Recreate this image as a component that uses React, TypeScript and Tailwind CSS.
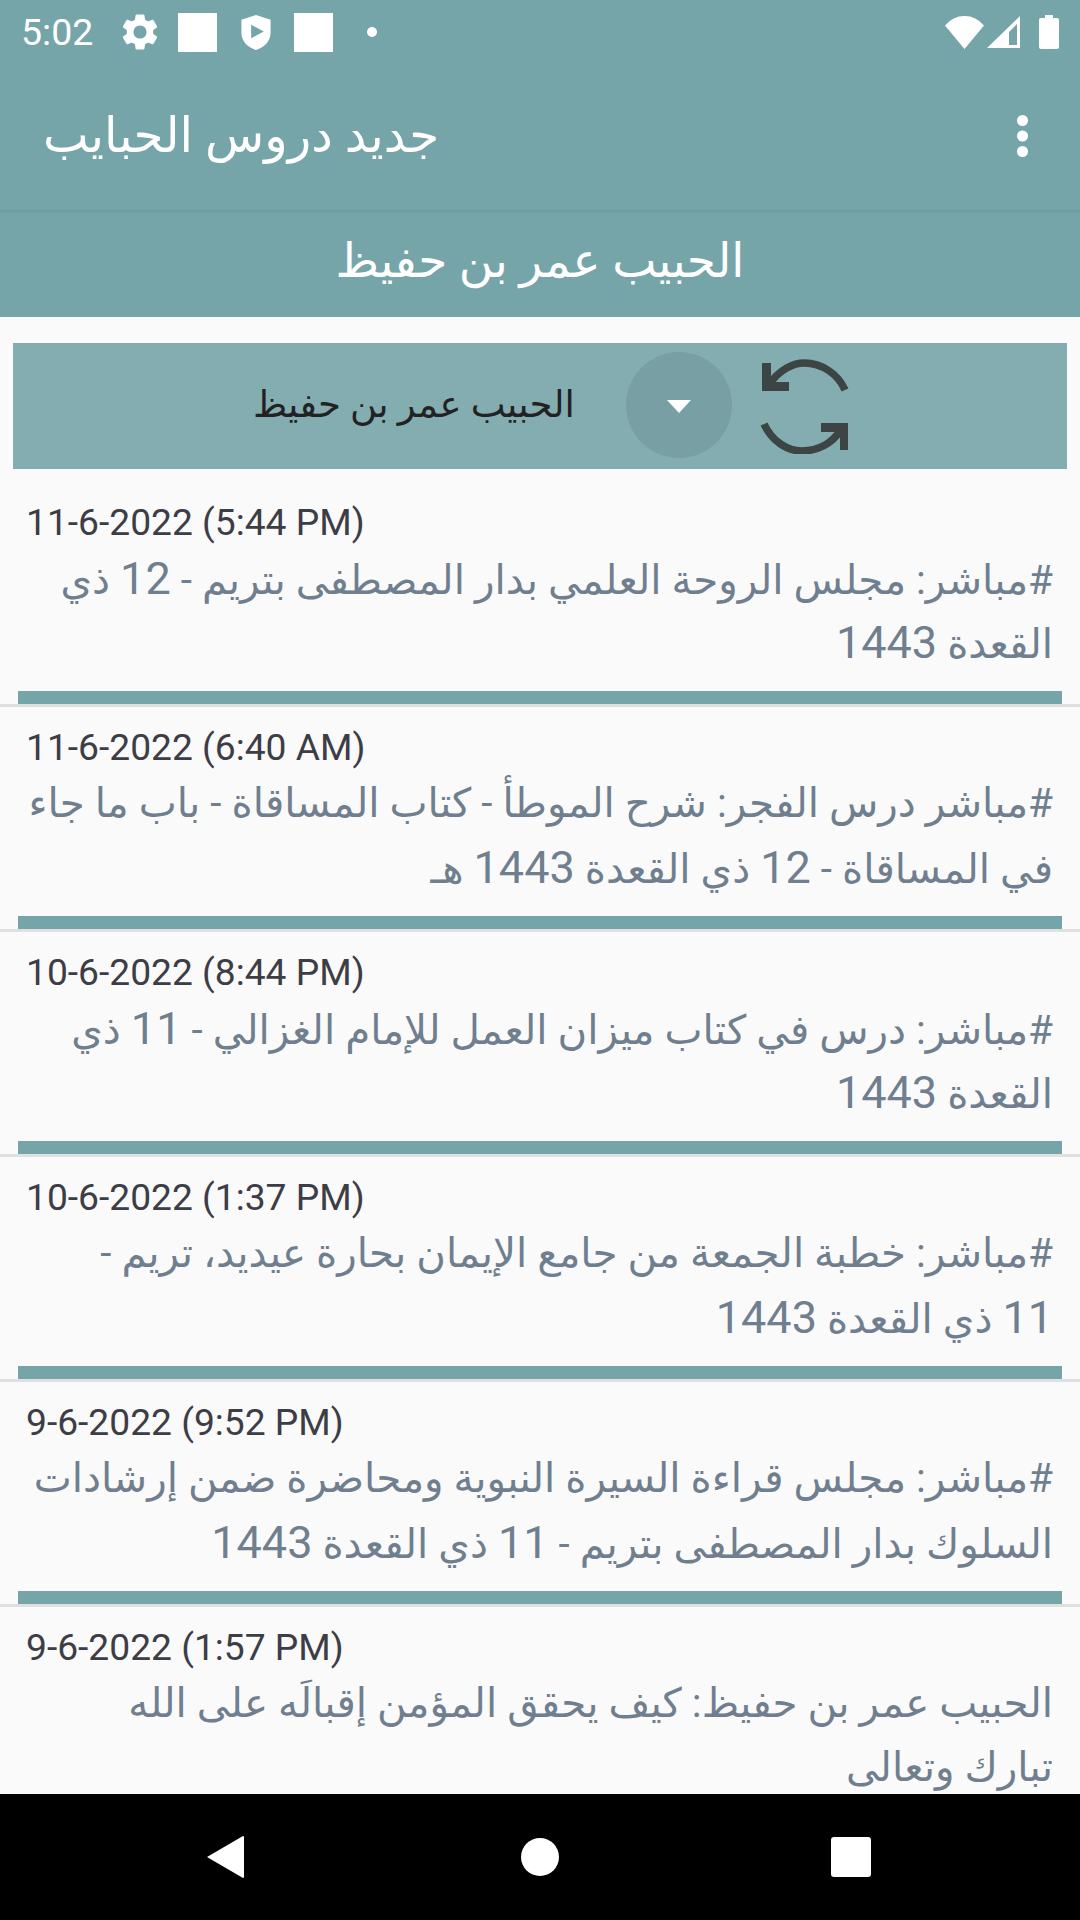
import React from "react";

const rows: [string, string, string][] = [
  ["11-6-2022 (5:44 PM)", "#مباشر: مجلس الروحة العلمي بدار المصطفى بتريم - 12 ذي", "القعدة 1443"],
  ["11-6-2022 (6:40 AM)", "#مباشر درس الفجر: شرح الموطأ - كتاب المساقاة - باب ما جاء", "في المساقاة - 12 ذي القعدة 1443 هـ"],
  ["10-6-2022 (8:44 PM)", "#مباشر: درس في كتاب ميزان العمل للإمام الغزالي - 11 ذي", "القعدة 1443"],
  ["10-6-2022 (1:37 PM)", "#مباشر: خطبة الجمعة من جامع الإيمان بحارة عيديد، تريم -", "11 ذي القعدة 1443"],
  ["9-6-2022 (9:52 PM)", "#مباشر: مجلس قراءة السيرة النبوية ومحاضرة ضمن إرشادات", "السلوك بدار المصطفى بتريم - 11 ذي القعدة 1443"],
  ["9-6-2022 (1:57 PM)", "الحبيب عمر بن حفيظ: كيف يحقق المؤمن إقبالَه على الله", "تبارك وتعالى"],
];

const font = "font-['Roboto','Noto_Sans','DejaVu_Sans',sans-serif]";

function Line({ text }: { text: string }) {
  return (
    <div className="h-[64px] leading-[64px] whitespace-nowrap">
      {text.split(/(\d+)/).map((part, i) =>
        /^\d+$/.test(part) ? (
          <span key={i} className="text-[45px]">{part}</span>
        ) : (
          <span key={i}>{part}</span>
        )
      )}
    </div>
  );
}

function Row({ date, a, b }: { date: string; a: string; b: string }) {
  return (
    <div className="h-[225px] shrink-0 flex flex-col">
      <div className="h-[209px] shrink-0 pl-[26px] pr-[27px] pt-[17px] flex flex-col">
        <div className="text-[37.2px] leading-[46px] text-[#3d3d46]">{date}</div>
        <div dir="rtl" className="text-[40.4px] text-[#6f7f8f] mt-[2px]">
          <Line text={a} />
          <Line text={b} />
        </div>
      </div>
      <div className="mx-[18px] h-[13px] shrink-0 bg-[#76a5a9]" />
      <div className="h-[3px] shrink-0 bg-[#e0e0e0]" />
    </div>
  );
}

export default function App() {
  return (
    <div className={`w-[1080px] h-[1920px] overflow-hidden flex flex-col bg-[#fafafa] ${font}`}>
      <div className="h-[210px] shrink-0 bg-[#76a5a9] flex flex-col">
        <div className="h-[64px] flex items-center justify-between pl-[21px] pr-[21px] text-white">
          <div className="flex items-center">
            <span className="text-[37.5px] w-[97px]">5:02</span>
            <svg viewBox="0 0 24 24" className="w-[44px] h-[44px]" fill="#fff"><path d="M19.14 12.94c.04-.3.06-.61.06-.94s-.02-.64-.07-.94l2.03-1.58a.49.49 0 0 0 .12-.61l-1.92-3.32a.49.49 0 0 0-.59-.22l-2.39.96c-.5-.38-1.03-.7-1.62-.94l-.36-2.54a.48.48 0 0 0-.48-.41h-3.84c-.24 0-.43.17-.47.41l-.36 2.54c-.59.24-1.13.57-1.62.94l-2.39-.96a.49.49 0 0 0-.59.22L2.74 8.87c-.12.21-.08.47.12.61l2.03 1.58c-.05.3-.09.63-.09.94s.02.64.07.94l-2.03 1.58a.49.49 0 0 0-.12.61l1.92 3.32c.12.22.37.29.59.22l2.39-.96c.5.38 1.03.7 1.62.94l.36 2.54c.05.24.24.41.48.41h3.84c.24 0 .44-.17.47-.41l.36-2.54c.59-.24 1.13-.56 1.62-.94l2.39.96c.22.08.47 0 .59-.22l1.92-3.32c.12-.22.07-.47-.12-.61l-2.01-1.58zM12 15.6A3.6 3.6 0 1 1 12 8.4a3.6 3.6 0 0 1 0 7.2z"/></svg>
            <div className="w-[39px] h-[39px] bg-white ml-[16px]" />
            <svg viewBox="0 0 30 36" className="w-[30px] h-[35px] ml-[24px]"><path fill="#fff" fillRule="evenodd" d="M15 0 30 5v13c0 9-6 15-15 18C6 33 0 27 0 18V5zM10 10v14l13-7z"/></svg>
            <div className="w-[39px] h-[39px] bg-white ml-[23px]" />
            <div className="w-[10px] h-[10px] rounded-full bg-white ml-[34px]" />
          </div>
          <div className="flex items-center">
            <svg viewBox="0 0 39 33" className="w-[39px] h-[33px]"><path fill="#fff" d="M19.5 33 0 9.5Q8 0 19.5 0T39 9.5z"/></svg>
            <svg viewBox="0 0 33 32" className="w-[33px] h-[32px] ml-[3px]"><path fill="#fff" fillRule="evenodd" d="M33 0v32H0zM30 8l-8 8v13h8z"/></svg>
            <svg viewBox="0 0 20 34" className="w-[20px] h-[34px] ml-[19px]"><path fill="#fff" d="M6 0h8v3h4q2 0 2 2v27q0 2-2 2H2q-2 0-2-2V5q0-2 2-2h4z"/></svg>
          </div>
        </div>
        <div className="flex-1 flex items-center justify-between pl-[43px] pr-[52px] pb-[2px]">
          <span dir="rtl" className="text-[48.5px] text-white">جديد دروس الحبايب</span>
          <svg viewBox="0 0 11 42" className="w-[11px] h-[42px]" fill="#fff"><circle cx="5.5" cy="5.5" r="5.5"/><circle cx="5.5" cy="21" r="5.5"/><circle cx="5.5" cy="36.5" r="5.5"/></svg>
        </div>
      </div>
      <div className="h-[107px] shrink-0 bg-[#76a5a9] relative flex items-center justify-center pb-[4px]">
        <div className="absolute left-0 right-0 top-0 h-[5px] bg-linear-to-b from-[#6d999d] to-[#76a5a9]" />
        <span dir="rtl" className="text-[47px] text-white">الحبيب عمر بن حفيظ</span>
      </div>
      <div className="h-[26px] shrink-0" />
      <div className="mx-[13px] h-[126px] shrink-0 bg-[#84adb2] flex items-center pl-[240px]">
        <span dir="rtl" className="w-[373px] text-left text-[37px] text-[#222222] -mt-[3px]">الحبيب عمر بن حفيظ</span>
        <div className="w-[106px] h-[106px] rounded-full bg-[#78a0a4] flex items-center justify-center -mt-[2px]">
          <div className="w-0 h-0 mt-[3px] border-x-[12px] border-x-transparent border-t-[13px] border-t-white" />
        </div>
        <svg viewBox="20 12 90 96" className="w-[90px] h-[96px] ml-[28px] -mt-[1px]" fill="none">
          <path stroke="#3c4543" strokeWidth="7.5" d="M28 40C40 22 55 17 64 17 82 17 98 28 105 44M24 78C32 95 47 105 62 105 78 105 92 97 101 84"/>
          <path fill="#3c4543" d="M22 17v28h27v-9H31V17zM81 77h27v27h-8V86H81z"/>
        </svg>
      </div>
      <div className="flex-1 min-h-0 overflow-hidden pt-[13px] flex flex-col">
        {rows.map(([d, a, b], i) => (
          <Row key={i} date={d} a={a} b={b} />
        ))}
      </div>
      <div className="h-[126px] shrink-0 bg-black relative">
        <svg viewBox="0 0 38 42" className="absolute left-[207px] top-[42px] w-[38px] h-[42px]"><path fill="#fff" d="M0 21 36 0q1 0 1 1v40q0 1-1 1z"/></svg>
        <div className="absolute left-[521px] top-[44px] w-[38px] h-[38px] rounded-full bg-white" />
        <div className="absolute left-[831px] top-[43px] w-[40px] h-[40px] rounded-[3px] bg-white" />
      </div>
    </div>
  );
}
